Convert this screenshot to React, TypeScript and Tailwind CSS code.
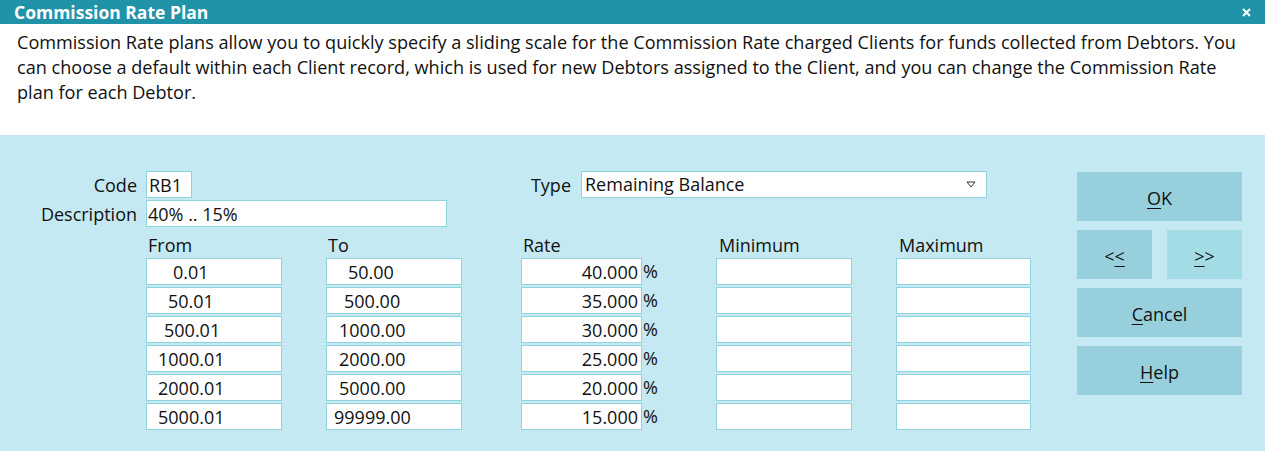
import React from "react";

const rows = [
	{from: "0.01", fromPad: "pl-[26px]", to: "50.00", toPad: "pl-[21px]", rate: "40.000"},
	{from: "50.01", fromPad: "pl-[21px]", to: "500.00", toPad: "pl-[17px]", rate: "35.000"},
	{from: "500.01", fromPad: "pl-[17px]", to: "1000.00", toPad: "pl-[12px]", rate: "30.000"},
	{from: "1000.01", fromPad: "pl-[11px]", to: "2000.00", toPad: "pl-[12px]", rate: "25.000"},
	{from: "2000.01", fromPad: "pl-[11px]", to: "5000.00", toPad: "pl-[12px]", rate: "20.000"},
	{from: "5000.01", fromPad: "pl-[11px]", to: "99999.00", toPad: "pl-[7px]", rate: "15.000"},
];

const box = "h-[27px] border border-[#8fd3df] bg-white leading-[27px] whitespace-nowrap";

const Button = ({children, light}: { children: React.ReactNode; light?: boolean }) => (
	<button
		className={`flex h-[49px] flex-1 items-center justify-center pt-[3px] text-[18px] text-[#111] ${light ? "bg-[#a4dce6]" : "bg-[#97d0dc]"}`}>
		{children}
	</button>
);

const U = ({children}: { children: React.ReactNode }) => (
	<span className="underline decoration-1 underline-offset-[3px]">{children}</span>
);

export default function App() {
	return (
		<div className="flex h-[451px] w-[1265px] flex-col font-['Open_Sans',sans-serif] text-[18px] text-[#111]">
			<div className="flex h-[24px] items-center justify-between bg-[#2093a9] pl-[14px] pr-[14px]">
				<span className="text-[17.5px] font-bold leading-[24px] text-white">Commission Rate Plan</span>
				<svg width="9" height="9" viewBox="0 0 9 9">
					<path d="M1 1 L8 8 M8 1 L1 8" stroke="white" strokeWidth="2"/>
				</svg>
			</div>

			<div className="h-[111px] bg-white px-[17px] pt-[6px] text-[18.1px] leading-[25px]">
				<p className="whitespace-nowrap">
					Commission Rate plans allow you to quickly specify a sliding scale for the Commission Rate charged Clients for funds collected from Debtors. You
					<br/>
					can choose a default within each Client record, which is used for new Debtors assigned to the Client, and you can change the Commission Rate
					<br/>
					plan for each Debtor.
				</p>
			</div>

			<div className="flex flex-1 bg-[#c5e9f2] pt-[36px]">
				<div className="w-[1077px]">
					<div className="flex h-[27px]">
						<div className="w-[146px] pr-[9px] text-right leading-[29px]">Code</div>
						<div className={`${box} w-[46px] pl-[2px]`}>RB1</div>
						<div className="w-[389px] pr-[10px] text-right leading-[29px]">Type</div>
						<div className={`${box} flex w-[406px] items-center justify-between pl-[3px] pr-[10px]`}>
							<span>Remaining Balance</span>
							<svg width="10" height="7" viewBox="0 0 10 7">
								<path d="M1 1 L9 1 L5 6 Z" fill="none" stroke="#333" strokeWidth="1"/>
							</svg>
						</div>
					</div>

					<div className="mt-[2px] flex h-[27px]">
						<div className="w-[146px] pr-[9px] text-right leading-[29px]">Description</div>
						<div className={`${box} w-[301px] pl-[1px]`}>40% .. 15%</div>
					</div>

					<div className="flex h-[31px] pl-[146px] pt-[8px] leading-[20px]">
						<div className="w-[180px] pl-[2px]">From</div>
						<div className="w-[195px] pl-[2px]">To</div>
						<div className="w-[195px] pl-[2px]">Rate</div>
						<div className="w-[180px] pl-[3px]">Minimum</div>
						<div className="pl-[3px]">Maximum</div>
					</div>

					<div className="flex flex-col gap-[2px] pl-[146px]">
						{rows.map((r) => (
							<div key={r.from} className="flex">
								<div className={`${box} w-[136px] ${r.fromPad}`}>{r.from}</div>
								<div className={`${box} ml-[44px] w-[136px] ${r.toPad}`}>{r.to}</div>
								<div className={`${box} ml-[59px] w-[121px] pr-[3px] text-right`}>{r.rate}</div>
								<div className="w-[74px] pl-[1px] leading-[27px]">%</div>
								<div className={`${box} w-[136px]`}/>
								<div className={`${box} ml-[44px] w-[135px]`}/>
							</div>
						))}
					</div>
				</div>

				<div className="flex w-[165px] flex-col gap-[9px] pt-[1px]">
					<div className="flex">
						<Button><U>O</U>K</Button>
					</div>
					<div className="flex gap-[15px]">
						<Button>&lt;<U>&lt;</U></Button>
						<Button light><U>&gt;</U>&gt;</Button>
					</div>
					<div className="flex">
						<Button><U>C</U>ancel</Button>
					</div>
					<div className="flex">
						<Button><U>H</U>elp</Button>
					</div>
				</div>
			</div>
		</div>
	);
}
